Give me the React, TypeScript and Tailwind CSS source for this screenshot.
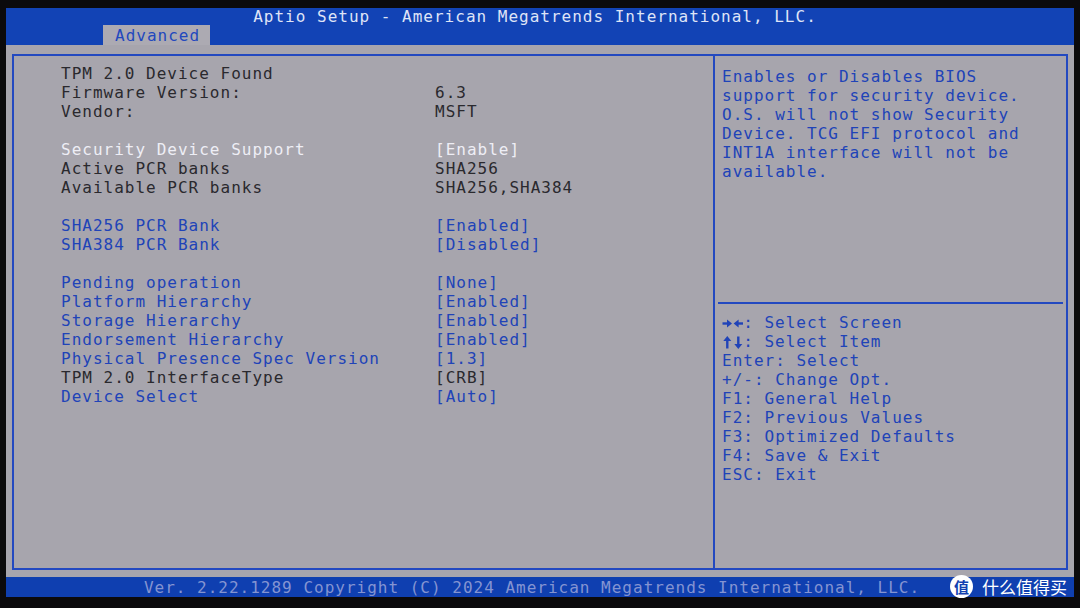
const mono = { fontFamily: '"DejaVu Sans Mono", "Liberation Mono", monospace' };

type Tone = 'dark' | 'blue' | 'white';
type Row = { label?: string; value?: string; tone?: Tone; valueTone?: Tone };

const rows: Row[] = [
  { label: 'TPM 2.0 Device Found', tone: 'dark' },
  { label: 'Firmware Version:', value: '6.3', tone: 'dark' },
  { label: 'Vendor:', value: 'MSFT', tone: 'dark' },
  {},
  { label: 'Security Device Support', value: '[Enable]', tone: 'white' },
  { label: 'Active PCR banks', value: 'SHA256', tone: 'dark' },
  { label: 'Available PCR banks', value: 'SHA256,SHA384', tone: 'dark' },
  {},
  { label: 'SHA256 PCR Bank', value: '[Enabled]', tone: 'blue' },
  { label: 'SHA384 PCR Bank', value: '[Disabled]', tone: 'blue' },
  {},
  { label: 'Pending operation', value: '[None]', tone: 'blue' },
  { label: 'Platform Hierarchy', value: '[Enabled]', tone: 'blue' },
  { label: 'Storage Hierarchy', value: '[Enabled]', tone: 'blue' },
  { label: 'Endorsement Hierarchy', value: '[Enabled]', tone: 'blue' },
  { label: 'Physical Presence Spec Version', value: '[1.3]', tone: 'blue' },
  { label: 'TPM 2.0 InterfaceType', value: '[CRB]', tone: 'dark', valueTone: 'dark' },
  { label: 'Device Select', value: '[Auto]', tone: 'blue' },
];

const toneClass: Record<Tone, string> = {
  dark: 'text-[#2a292e]',
  blue: 'text-[#2043b8]',
  white: 'text-[#eeeef5]',
};

const helpText = [
  'Enables or Disables BIOS',
  'support for security device.',
  'O.S. will not show Security',
  'Device. TCG EFI protocol and',
  'INT1A interface will not be',
  'available.',
];

const keys = [
  'Enter: Select',
  '+/-: Change Opt.',
  'F1: General Help',
  'F2: Previous Values',
  'F3: Optimized Defaults',
  'F4: Save & Exit',
  'ESC: Exit',
];

// bold BIOS arrows, one character cell each
function Arrow({ dir }: { dir: 'right' | 'left' | 'up' | 'down' }) {
  const shapes = {
    right: (
      <>
        <rect x="0.5" y="9.3" width="6" height="2.4" />
        <polygon points="5,6.5 10,10.5 5,14.5" />
      </>
    ),
    left: (
      <>
        <rect x="4.1" y="9.3" width="6" height="2.4" />
        <polygon points="5.6,6.5 0.6,10.5 5.6,14.5" />
      </>
    ),
    up: (
      <>
        <rect x="4.1" y="8" width="2.4" height="8.5" />
        <polygon points="1.3,9 5.3,4 9.3,9" />
      </>
    ),
    down: (
      <>
        <rect x="4.1" y="4.5" width="2.4" height="8.5" />
        <polygon points="1.3,12 5.3,17 9.3,12" />
      </>
    ),
  };
  return (
    <span className="inline-block w-[10.6px] h-[19px] align-top">
      <svg width="10.6" height="19" viewBox="0 0 10.6 19" fill="currentColor">
        {shapes[dir]}
      </svg>
    </span>
  );
}

function App() {
  return (
    <div className="w-[1080px] h-[608px] bg-[#0b0a0c] relative overflow-hidden pt-[8px] px-[6px] pb-[11px]">
      <div className="h-full flex flex-col text-[16px] tracking-[1px] leading-[19px]" style={mono}>
        {/* top bar */}
        <div className="h-[37px] bg-[#1243b5] flex flex-col shrink-0">
          <div className="h-[17px] leading-[18px] text-center text-[#dfe4f7] pr-[10px]">
            Aptio Setup - American Megatrends International, LLC.
          </div>
          <div className="h-[20px] flex">
            <div className="ml-[97px] w-[107px] bg-[#acaab2] text-[#2248be] leading-[21px] pl-[12px]">Advanced</div>
          </div>
        </div>

        {/* body */}
        <div className="flex-1 bg-[#a7a5ad] pt-[9px] pl-[6px] pr-[6px] pb-[7px] flex">
          <div className="flex-1 border-2 border-[#2349c0] flex">
            <div className="w-[701px] pl-[47px] pt-[8px] border-r-2 border-[#2349c0]">
              {rows.map((r, i) =>
                r.label ? (
                  <div key={i} className="grid grid-cols-[374px_1fr] h-[19px] whitespace-pre">
                    <span className={toneClass[r.tone!]}>{r.label}</span>
                    <span className={toneClass[r.valueTone ?? r.tone!]}>{r.value}</span>
                  </div>
                ) : (
                  <div key={i} className="h-[19px]" />
                )
              )}
            </div>
            <div className="flex-1 flex flex-col text-[#2043b8]">
              <div className="h-[246px] pt-[11px] pl-[7px] whitespace-pre">
                {helpText.map(t => (
                  <div key={t}>{t}</div>
                ))}
              </div>
              <div className="h-[2px] bg-[#2349c0] mx-[3px]" />
              <div className="pt-[9px] pl-[7px] whitespace-pre">
                <div className="h-[19px]">
                  <Arrow dir="right" />
                  <Arrow dir="left" />
                  {': Select Screen'}
                </div>
                <div className="h-[19px]">
                  <Arrow dir="up" />
                  <Arrow dir="down" />
                  {': Select Item'}
                </div>
                {keys.map(k => (
                  <div key={k}>{k}</div>
                ))}
              </div>
            </div>
          </div>
        </div>

        {/* footer */}
        <div className="h-[20px] bg-[#0f3fb0] text-center text-[#8494d2] leading-[22px] pr-[16px] shrink-0">
          Ver. 2.22.1289 Copyright (C) 2024 American Megatrends International, LLC.
        </div>
      </div>

      {/* watermark */}
      <div className="absolute left-[950px] top-[575px] flex items-center gap-[9px]">
        <div
          className="w-[23px] h-[23px] rounded-full bg-white flex items-center justify-center text-[#1240b0] text-[15px] font-bold leading-none"
          style={{ fontFamily: '"Noto Sans CJK SC", sans-serif' }}
        >
          值
        </div>
        <div
          className="text-white text-[17px] leading-none tracking-[0px]"
          style={{ fontFamily: '"Noto Sans CJK SC", sans-serif' }}
        >
          什么值得买
        </div>
      </div>
    </div>
  );
}

export default App;
